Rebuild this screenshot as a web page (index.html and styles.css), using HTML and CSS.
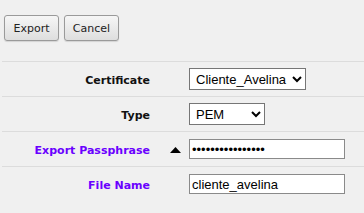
FILE: index.html
```html
<!DOCTYPE html>
<html lang="en">
<head>
    <meta charset="UTF-8">
    <title>Export Certificate</title>
    <link rel="stylesheet" href="styles.css">
</head>
<body>
    <div class="toolbar">
        <button class="btn">Export</button>
        <button class="btn">Cancel</button>
    </div>

    <div class="form">
        <div class="row">
            <div class="label">Certificate</div>
            <div class="toggle"></div>
            <div class="field">
                <select class="select cert">
                    <option>Cliente_Avelina</option>
                </select>
            </div>
        </div>
        <div class="row">
            <div class="label">Type</div>
            <div class="toggle"></div>
            <div class="field">
                <select class="select type">
                    <option>PEM</option>
                </select>
            </div>
        </div>
        <div class="row">
            <div class="label required">Export Passphrase</div>
            <div class="toggle">
                <svg width="11" height="6" viewBox="0 0 11 6"><polygon points="5.5,0 11,6 0,6" fill="#000"/></svg>
            </div>
            <div class="field">
                <input type="password" class="text" value="aaaaaaaaaaaaaaaa">
            </div>
        </div>
        <div class="row">
            <div class="label required">File Name</div>
            <div class="toggle"></div>
            <div class="field">
                <input type="text" class="text" value="cliente_avelina">
            </div>
        </div>
    </div>
</body>
</html>
```

FILE: styles.css
```css
* {
    margin: 0;
    padding: 0;
    box-sizing: border-box;
}

body {
    font-family: "DejaVu Sans", Verdana, sans-serif;
    font-size: 11px;
    background: #f0f0f0;
    color: #000;
}

.toolbar {
    display: flex;
    gap: 5px;
    padding: 15px 4px 20px;
}

.btn {
    width: 55px;
    height: 26px;
    font-family: "DejaVu Sans", Verdana, sans-serif;
    font-size: 11px;
    color: #222;
    background: linear-gradient(#f6f6f6, #dedede);
    border: 1px solid #9a9a9a;
    border-radius: 3px;
    box-shadow: 0 1px 1px rgba(0, 0, 0, 0.12);
}

.form {
    margin-left: 2px;
}

.row {
    display: grid;
    grid-template-columns: 148px 39px 1fr;
    align-items: center;
    height: 35px;
    border-top: 1px solid #dcdcdc;
}

.label {
    text-align: right;
    font-weight: bold;
    color: #111;
    padding-top: 2px;
}

.label.required {
    color: #6a00ff;
}

.toggle {
    display: flex;
    justify-content: flex-end;
    padding-right: 8px;
    padding-top: 1px;
}

.select {
    height: 22px;
    font-family: "Liberation Sans", Arial, sans-serif;
    font-size: 13px;
    color: #000;
    background: #fff;
    border: 1px solid #767676;
    border-radius: 0;
    padding-left: 2px;
}

.select.cert {
    width: 117px;
}

.select.type {
    width: 76px;
}

.text {
    width: 156px;
    height: 20px;
    font-family: "Liberation Sans", Arial, sans-serif;
    font-size: 13px;
    color: #000;
    background: #fff;
    border: 1px solid #8a8a8a;
    padding: 0 2px;
}
```
